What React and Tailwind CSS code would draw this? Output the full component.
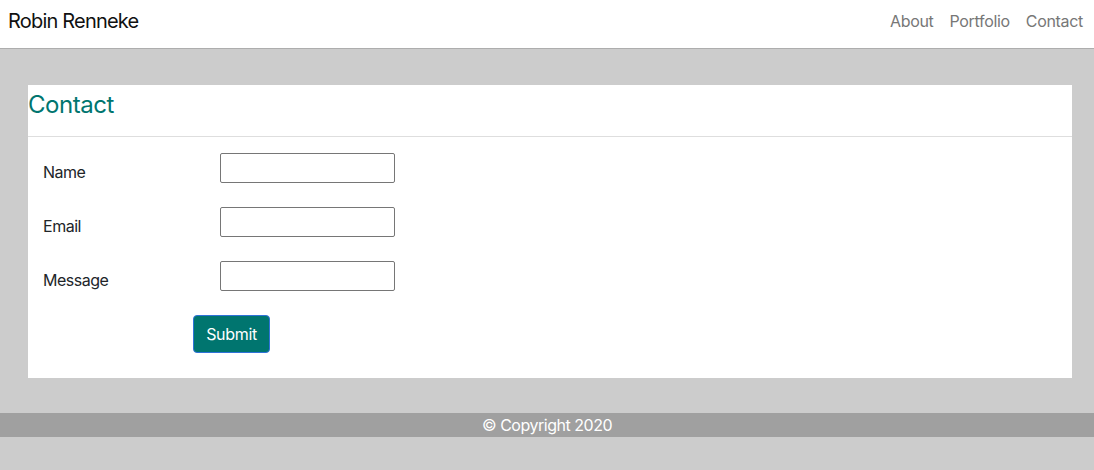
const font = "font-['Inter','Liberation_Sans',sans-serif]";

function Field({ label }) {
  return (
    <div className="flex h-[30px] items-start">
      <label className="mt-[7px] w-[192px] pl-[15px] text-[16px] leading-6 tracking-[-0.03em] text-[#212529]">
        {label}
      </label>
      <input
        type="text"
        className="h-[30px] w-[175px] rounded-[2px] border border-[#767676] bg-white outline-none"
      />
    </div>
  );
}

export default function App() {
  return (
    <div className={`${font} flex min-h-[470px] flex-col bg-[#cccccc]`}>
      <nav className="flex h-[49px] items-center justify-between border-b border-[#adadad] bg-white pb-[7px]">
        <span className="pl-2 text-[20px] leading-7 tracking-[-0.04em] text-[#111]">Robin Renneke</span>
        <ul className="flex gap-4 pr-[11px] text-[16px] leading-6 tracking-[-0.02em] text-[#777]">
          <li>About</li>
          <li>Portfolio</li>
          <li>Contact</li>
        </ul>
      </nav>

      <main className="mt-[36px] mr-[22px] mb-[35px] ml-[28px] bg-white">
        <div className="h-[52px] border-b border-[#dedede] pt-[6px]">
          <h3 className="text-[24px] leading-[1.2] tracking-[-0.02em] text-[#00756f]">Contact</h3>
        </div>
        <form className="flex flex-col gap-6 pt-4 pb-[25px]" onSubmit={(e) => e.preventDefault()}>
          <Field label="Name" />
          <Field label="Email" />
          <Field label="Message" />
          <div className="pl-[165px]">
            <button
              type="submit"
              className="h-[38px] w-[77px] rounded-[4px] border border-[#2f72d8] bg-[#00756f] text-[16px] tracking-[-0.02em] text-white"
            >
              Submit
            </button>
          </div>
        </form>
      </main>

      <footer className="h-6 bg-[#a0a0a0] text-center text-[16px] leading-6 tracking-[-0.03em] text-white">
        © Copyright 2020
      </footer>
    </div>
  );
}
